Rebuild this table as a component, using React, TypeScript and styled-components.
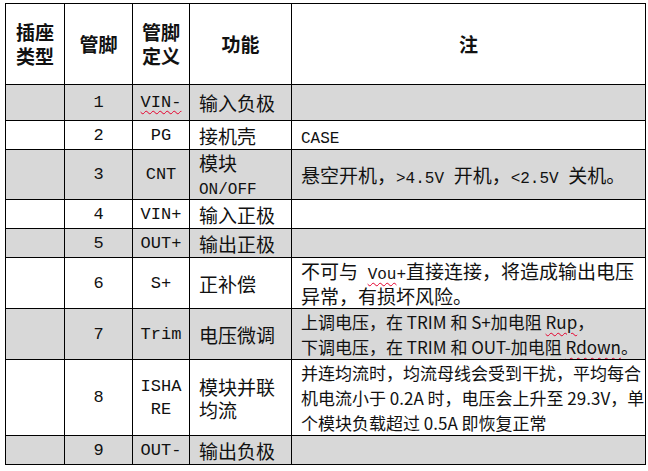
import React from "react"
import styled, { createGlobalStyle } from "styled-components"

const GlobalStyle = createGlobalStyle`
  html, body {
    margin: 0;
    padding: 0;
    background: #fff;
  }
  body {
    width: 648px;
    height: 471px;
    overflow: hidden;
  }
`

const Page = styled.div`
  padding: 3px 0 0 5px;
`

const Table = styled.table`
  border-collapse: collapse;
  table-layout: fixed;
  width: 640px;
  color: #111;
  font-family: "Noto Sans CJK SC", sans-serif;
  font-size: 19px;
`

const Col = styled.col<{ $w: number }>`
  width: ${p => p.$w}px;
`

const Row = styled.tr<{ $h: number; $shaded?: boolean }>`
  height: ${p => p.$h}px;
  background: ${p => (p.$shaded ? "#d8d8d8" : "#fff")};
`

const Th = styled.th`
  border: 1px solid #000;
  padding: 0;
  font-weight: 700;
  line-height: 24px;
  text-align: center;
  vertical-align: middle;
`

const Cell = styled.td<{ $center?: boolean; $mono?: boolean }>`
  border: 1px solid #000;
  padding: 0 0 0 ${p => (p.$center ? 0 : 9)}px;
  text-align: ${p => (p.$center ? "center" : "left")};
  vertical-align: middle;
  line-height: 23px;
  white-space: nowrap;
  overflow: hidden;
  font-family: ${p =>
    p.$mono
      ? `"Liberation Mono", "Noto Sans CJK SC", monospace`
      : `"Noto Sans CJK SC", sans-serif`};
  font-size: ${p => (p.$mono ? 17 : 19)}px;
`

// half-width latin inside the CJK cells
const Lat = styled.span`
  font-family: "Liberation Mono", monospace;
  font-size: 16px;
  line-height: 1;
`

const Note = styled.div`
  line-height: 25px;
`

const SansNote = styled.div`
  font-family: "Noto Sans CJK SC", sans-serif;
  font-size: 17px;
  line-height: 25px;
`

const Squiggle = styled.span`
  text-decoration: underline wavy #e4002b;
  text-decoration-thickness: 1px;
  text-underline-offset: 3px;
`

interface PinRow {
  no: string
  name: React.ReactNode
  func: React.ReactNode
  note?: React.ReactNode
  h: number
}

const rows: PinRow[] = [
  { no: "1", name: <Squiggle>VIN-</Squiggle>, func: "输入负极", h: 36 },
  { no: "2", name: "PG", func: "接机壳", note: <Lat>CASE</Lat>, h: 29 },
  {
    no: "3",
    name: "CNT",
    func: (
      <>
        模块
        <br />
        <Lat>ON/OFF</Lat>
      </>
    ),
    note: (
      <>
        悬空开机，<Lat>&gt;4.5V </Lat>开机，<Lat>&lt;2.5V </Lat>关机。
      </>
    ),
    h: 50,
  },
  { no: "4", name: "VIN+", func: "输入正极", h: 29 },
  { no: "5", name: "OUT+", func: "输出正极", h: 29 },
  {
    no: "6",
    name: "S+",
    func: "正补偿",
    note: (
      <Note>
        不可与
        <Lat>
          {" "}
          <Squiggle>Vou</Squiggle>+
        </Lat>
        直接连接，将造成输出电压
        <br />
        异常，有损坏风险。
      </Note>
    ),
    h: 51,
  },
  {
    no: "7",
    name: "Trim",
    func: "电压微调",
    note: (
      <SansNote>
        上调电压，在 TRIM 和 S+加电阻 <Squiggle>Rup</Squiggle>，
        <br />
        下调电压，在 TRIM 和 OUT-加电阻 <Squiggle>Rdown</Squiggle>。
      </SansNote>
    ),
    h: 51,
  },
  {
    no: "8",
    name: (
      <>
        ISHA
        <br />
        RE
      </>
    ),
    func: (
      <>
        模块并联
        <br />
        均流
      </>
    ),
    note: (
      <SansNote>
        并连均流时，均流母线会受到干扰，平均每合
        <br />
        机电流小于 0.2A 时，电压会上升至 29.3V，单
        <br />
        个模块负载超过 0.5A 即恢复正常
      </SansNote>
    ),
    h: 76,
  },
  { no: "9", name: "OUT-", func: "输出负极", h: 29 },
]

export default function App() {
  return (
    <Page>
      <GlobalStyle />
      <Table>
        <colgroup>
          <Col $w={59} />
          <Col $w={68} />
          <Col $w={57} />
          <Col $w={102} />
          <Col $w={354} />
        </colgroup>
        <thead>
          <Row $h={81}>
            <Th>
              插座
              <br />
              类型
            </Th>
            <Th>管脚</Th>
            <Th>
              管脚
              <br />
              定义
            </Th>
            <Th>功能</Th>
            <Th>注</Th>
          </Row>
        </thead>
        <tbody>
          {rows.map((r, i) => (
            <Row key={r.no} $h={r.h} $shaded={i % 2 === 0}>
              <Cell />
              <Cell $center $mono>
                {r.no}
              </Cell>
              <Cell $center $mono>
                {r.name}
              </Cell>
              <Cell>{r.func}</Cell>
              <Cell>{r.note}</Cell>
            </Row>
          ))}
        </tbody>
      </Table>
    </Page>
  )
}
